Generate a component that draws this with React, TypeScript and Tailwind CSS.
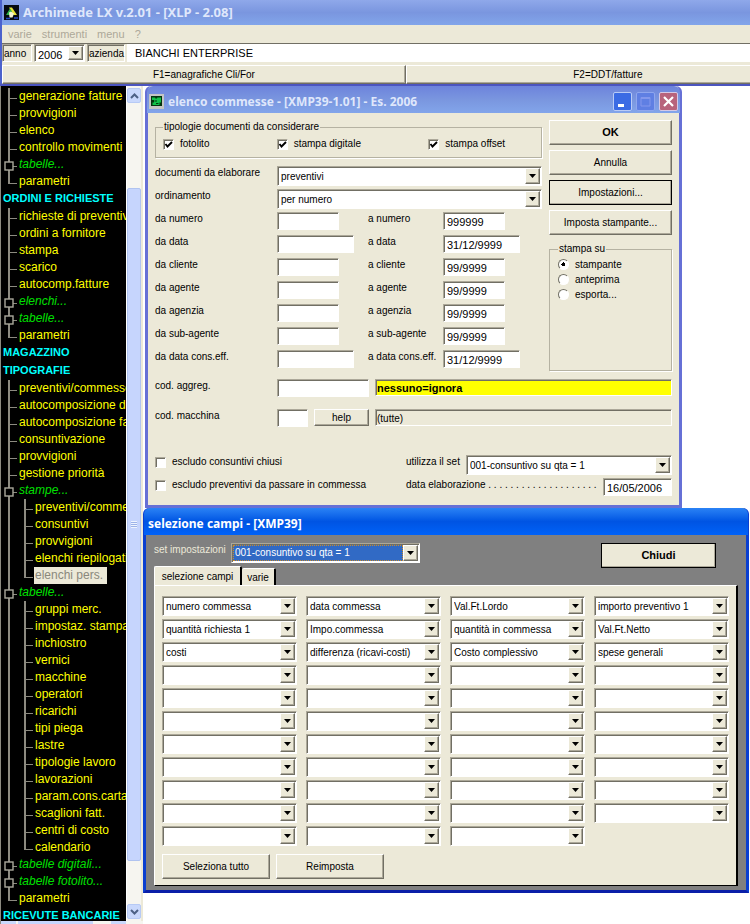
import type { ReactNode } from "react";

type TreeItem = {
  label: string;
  kind: "category" | "leaf" | "last" | "branch";
  nested?: boolean;
  selected?: boolean;
};

const tree: TreeItem[] = [
  { label: "generazione fatture", kind: "leaf" },
  { label: "provvigioni", kind: "leaf" },
  { label: "elenco", kind: "leaf" },
  { label: "controllo movimenti", kind: "leaf" },
  { label: "tabelle...", kind: "branch" },
  { label: "parametri", kind: "last" },
  { label: "ORDINI E RICHIESTE", kind: "category" },
  { label: "richieste di preventivo", kind: "leaf" },
  { label: "ordini a fornitore", kind: "leaf" },
  { label: "stampa", kind: "leaf" },
  { label: "scarico", kind: "leaf" },
  { label: "autocomp.fatture", kind: "leaf" },
  { label: "elenchi...", kind: "branch" },
  { label: "tabelle...", kind: "branch" },
  { label: "parametri", kind: "last" },
  { label: "MAGAZZINO", kind: "category" },
  { label: "TIPOGRAFIE", kind: "category" },
  { label: "preventivi/commesse", kind: "leaf" },
  { label: "autocomposizione de", kind: "leaf" },
  { label: "autocomposizione fa", kind: "leaf" },
  { label: "consuntivazione", kind: "leaf" },
  { label: "provvigioni", kind: "leaf" },
  { label: "gestione priorità", kind: "leaf" },
  { label: "stampe...", kind: "branch" },
  { label: "preventivi/comme", kind: "leaf", nested: true },
  { label: "consuntivi", kind: "leaf", nested: true },
  { label: "provvigioni", kind: "leaf", nested: true },
  { label: "elenchi riepilogati", kind: "leaf", nested: true },
  { label: "elenchi pers.", kind: "last", nested: true, selected: true },
  { label: "tabelle...", kind: "branch" },
  { label: "gruppi merc.", kind: "leaf", nested: true },
  { label: "impostaz. stampa", kind: "leaf", nested: true },
  { label: "inchiostro", kind: "leaf", nested: true },
  { label: "vernici", kind: "leaf", nested: true },
  { label: "macchine", kind: "leaf", nested: true },
  { label: "operatori", kind: "leaf", nested: true },
  { label: "ricarichi", kind: "leaf", nested: true },
  { label: "tipi piega", kind: "leaf", nested: true },
  { label: "lastre", kind: "leaf", nested: true },
  { label: "tipologie lavoro", kind: "leaf", nested: true },
  { label: "lavorazioni", kind: "leaf", nested: true },
  { label: "param.cons.carta", kind: "leaf", nested: true },
  { label: "scaglioni fatt.", kind: "leaf", nested: true },
  { label: "centri di costo", kind: "leaf", nested: true },
  { label: "calendario", kind: "last", nested: true },
  { label: "tabelle digitali...", kind: "branch" },
  { label: "tabelle fotolito...", kind: "branch" },
  { label: "parametri", kind: "last" },
  { label: "RICEVUTE BANCARIE", kind: "category" },
];

const ranges = [
  { id: "numero", label: "numero", to: "999999", wide: false },
  { id: "data", label: "data", to: "31/12/9999", wide: true },
  { id: "cliente", label: "cliente", to: "99/9999", wide: false },
  { id: "agente", label: "agente", to: "99/9999", wide: false },
  { id: "agenzia", label: "agenzia", to: "99/9999", wide: false },
  { id: "sub-agente", label: "sub-agente", to: "99/9999", wide: false },
  { id: "data-cons", label: "data cons.eff.", to: "31/12/9999", wide: true },
];

const fieldNames = [
  "numero commessa",
  "data commessa",
  "Val.Ft.Lordo",
  "importo preventivo 1",
  "quantità richiesta 1",
  "Impo.commessa",
  "quantità in commessa",
  "Val.Ft.Netto",
  "costi",
  "differenza (ricavi-costi)",
  "Costo complessivo",
  "spese generali",
];

// 11 rows of 4, the last slot is not used
const fields = Array.from({ length: 43 }, (_, i) => fieldNames[i] ?? "");

const sunken =
  "border border-t-[#aca899] border-l-[#aca899] border-r-white border-b-white shadow-[inset_1px_1px_0_#716f64]";
const raised =
  "border border-t-white border-l-white border-r-[#716f64] border-b-[#716f64] bg-[#ece9d8] shadow-[inset_-1px_-1px_0_#aca899]";
const titleFont = "font-['Noto_Sans','Open_Sans',sans-serif] font-bold";

function TreeConnector({ kind }: { kind: "leaf" | "last" | "branch" | "line" }) {
  return (
    <svg aria-hidden="true" className="h-full w-4 shrink-0" viewBox="0 0 16 17" preserveAspectRatio="none" fill="none" stroke="#8c8a80">
      <path d={kind === "last" ? "M7 0V11" : "M7 0V18"} strokeWidth="2" />
      {kind !== "line" && <path d="M7 10.5H15" />}
      {kind === "branch" && <rect x="3" y="6" width="8" height="8" fill="#000" stroke="#aaa89c" strokeWidth="1.4" />}
    </svg>
  );
}

function TreeRow({ item }: { item: TreeItem }) {
  if (item.kind === "category") {
    return <li className="h-[18px] pl-0.5 text-[11px] font-bold leading-[17px] text-[#00ffff]">{item.label}</li>;
  }

  const color = item.selected
    ? "bg-[#ece9d8] text-[#8a887c]"
    : item.kind === "branch"
      ? "italic text-[#00e000]"
      : "text-[#ffff00]";

  return (
    <li className="flex h-[17px] pl-px">
      {item.nested && <TreeConnector kind="line" />}
      <TreeConnector kind={item.kind} />
      <span className={`pr-1 pl-px leading-[17px] ${color}`}>{item.label}</span>
    </li>
  );
}

function ScrollButton({ up }: { up?: boolean }) {
  return (
    <button
      type="button"
      aria-label={up ? "scorri su" : "scorri giù"}
      className="grid h-[15px] w-full place-items-center rounded-xs border border-[#b7caf5] bg-[#c9d8fc]"
    >
      <svg aria-hidden="true" className="h-[6px] w-[9px]" viewBox="0 0 9 6" fill="none" stroke="#4d6185" strokeWidth="2">
        <path d={up ? "M1 5 4.5 1.5 8 5" : "M1 1 4.5 4.5 8 1"} />
      </svg>
    </button>
  );
}

function Sidebar() {
  return (
    <aside className="flex w-[143px] shrink-0 flex-col border-l border-[#8c8a80] bg-[#ece9d8]">
      <div className="flex min-h-0 flex-1">
        <ul className="min-w-0 flex-1 overflow-hidden whitespace-nowrap bg-black pt-0.5 text-[12px]">
          {tree.map((item, i) => (
            <TreeRow key={i} item={item} />
          ))}
        </ul>
        <div className="mr-0.5 flex w-[15px] flex-col border-l border-white bg-[#f6f5f0] pt-0.5 pb-0.5">
          <ScrollButton up />
          <div className="flex-[85]" />
          <div className="grid flex-[672] place-items-center rounded-xs border border-[#b0c3f0] bg-[#c6d5fd]">
            <div className="h-[7px] w-[6px] bg-[repeating-linear-gradient(#eef4fe_0_1px,#9db3e8_1px_2px)]" />
          </div>
          <div className="flex-[43]" />
          <ScrollButton />
        </div>
      </div>
      <div className="flex h-[3px] bg-[#f6f5f0]">
        <div className="w-[15px] bg-[#c9d8fc]" />
        <div className="ml-0.5 w-[75px] bg-[#c6d5fd]" />
        <div className="ml-[18px] w-[15px] bg-[#c9d8fc]" />
      </div>
    </aside>
  );
}

function ComboBox({
  id,
  value,
  label,
  className = "h-5",
  active = false,
}: {
  id: string;
  value: string;
  label?: string;
  className?: string;
  active?: boolean;
}) {
  return (
    <div className={`flex min-w-0 bg-white p-px ${sunken} ${className}`}>
      <select
        id={id}
        aria-label={label}
        defaultValue={value}
        className={`min-w-0 flex-1 appearance-none leading-[14px] outline-none ${
          active ? "border border-dotted border-[#c98b2c] bg-[#316ac5] pl-px text-white" : "pt-0.5 pl-0.5"
        }`}
      >
        <option value={value}>{value}</option>
      </select>
      <span className={`grid w-[15px] shrink-0 place-items-center ${raised}`}>
        <svg aria-hidden="true" className="h-1 w-[7px]" viewBox="0 0 7 4">
          <path d="M0 0H7L3.5 4Z" fill="#000" />
        </svg>
      </span>
    </div>
  );
}

function TextBox({ id, value = "", className }: { id: string; value?: string; className: string }) {
  return (
    <input
      id={id}
      type="text"
      defaultValue={value}
      className={`h-[18px] bg-white pt-px pl-[3px] text-[11px] leading-[14px] outline-none ${sunken} ${className}`}
    />
  );
}

function CheckBox({ label, checked = false }: { label: string; checked?: boolean }) {
  return (
    <label className="flex items-center gap-1.5 leading-[14px] whitespace-nowrap">
      <span className="grid shrink-0">
        <input
          type="checkbox"
          defaultChecked={checked}
          className={`peer h-[11px] w-[11px] appearance-none bg-white [grid-area:1/1] ${sunken}`}
        />
        <svg
          aria-hidden="true"
          className="pointer-events-none hidden h-[11px] w-[11px] [grid-area:1/1] peer-checked:block"
          viewBox="0 0 11 11"
          fill="none"
        >
          <path d="M2.5 5 4.5 7.5 9 3" stroke="#000" strokeWidth="1.9" />
        </svg>
      </span>
      {label}
    </label>
  );
}

function Radio({ label, checked = false }: { label: string; checked?: boolean }) {
  return (
    <label className="flex h-[15px] items-center gap-1.5">
      <input
        type="radio"
        name="stampa-su"
        defaultChecked={checked}
        className="h-[11px] w-[11px] shrink-0 appearance-none rounded-full border border-t-[#716f64] border-l-[#716f64] border-r-white border-b-white bg-white checked:bg-[radial-gradient(circle,#000_2px,#fff_2px)]"
      />
      {label}
    </label>
  );
}

function PushButton({ children, className = "" }: { children: ReactNode; className?: string }) {
  return (
    <button type="button" className={`h-[25px] ${raised} ${className}`}>
      {children}
    </button>
  );
}

function AppIcon() {
  return (
    <svg aria-hidden="true" className="h-[15px] w-[15px]" viewBox="0 0 15 15">
      <rect width="15" height="15" fill="#060a10" />
      <path d="M5 2.5H8L13 10H9.5Z" fill="#e8e337" />
      <path d="M2 10 6 3.5 8 6.5 5.5 10Z" fill="#2fb24a" />
      <path d="M5 7.5 7 6.5 10 8.5 8.5 12.5H5.5Z" fill="#f3f3d0" />
      <path d="M2 13.5H6M10 13H14" stroke="#2747c4" strokeWidth="1.4" />
    </svg>
  );
}

function ReportIcon() {
  return (
    <svg aria-hidden="true" className="h-[15px] w-[15px]" viewBox="0 0 15 15">
      <rect width="15" height="15" fill="#c4c6c4" />
      <rect x="2" y="2" width="11" height="10" fill="#04340f" />
      <path d="M3 3.5H6L7 5 8.5 3.5H12V8.5H10.5V11H3.5V8.5H5V6H3Z" fill="#11c24a" />
      <path d="M5.5 7H8M7 9.5H9.5" stroke="#04340f" />
    </svg>
  );
}

function Header() {
  return (
    <header className="shrink-0 border-b-2 border-[#4c55c0]">
      <div className="border-l-2 border-[#4c62cc] bg-[#ece9d8]">
        <div className="flex h-[25px] items-center gap-1 bg-linear-to-b from-[#8fa8ea] via-[#7a96df] to-[#82a5ea] pl-0.5 text-[#dfe7fb]">
          <AppIcon />
          <h1 className={`text-[13px] ${titleFont}`}>Archimede LX v.2.01 - [XLP - 2.08]</h1>
        </div>
        <nav className="flex h-[19px] items-center gap-2.5 border-b border-[#716f64] pl-1.5 text-[11px] text-[#aca899]">
          <button type="button">varie</button>
          <button type="button">strumenti</button>
          <button type="button">menu</button>
          <button type="button">?</button>
        </nav>
        <div className="flex h-[18px] gap-0.5 text-[11px]">
          <label htmlFor="anno" className={`w-[30px] pl-px text-[10px] leading-[17px] ${sunken}`}>
            anno
          </label>
          <ComboBox id="anno" value="2006" className="h-[18px] w-[51px]" />
          <label htmlFor="azienda" className={`w-[38px] pl-px text-[10px] leading-[17px] ${sunken}`}>
            azienda
          </label>
          <input
            id="azienda"
            defaultValue="BIANCHI ENTERPRISE"
            className="min-w-0 flex-1 bg-white pl-2 outline-none"
          />
        </div>
        <div className="flex overflow-hidden pt-[3px] text-[10px]">
          <button type="button" className={`h-[19px] w-[54%] shrink-0 ${raised}`}>
            F1=anagrafiche Cli/For
          </button>
          <button type="button" className={`h-[19px] w-[54%] shrink-0 ${raised}`}>
            F2=DDT/fatture
          </button>
        </div>
      </div>
    </header>
  );
}

function CommesseWindow() {
  return (
    <section
      aria-label="elenco commesse"
      className="mr-[68px] ml-0.5 rounded-t-md border-x-3 border-b-3 border-[#6670d6] bg-[#ece9d8]"
    >
      <div className="-mx-px flex h-[27px] items-center gap-1 rounded-t-md bg-linear-to-b from-[#6d83dc] via-[#7a96df] to-[#82a5ea] pt-1 pr-0.5 pl-0.5 text-[#dfe7fb]">
        <ReportIcon />
        <h2 className={`flex-1 text-[12px] ${titleFont}`}>elenco commesse - [XMP39-1.01] - Es. 2006</h2>
        <button type="button" aria-label="riduci a icona" className="h-[19px] w-[19px] rounded-xs border border-[#b9cbf6] bg-[#3b6be4]">
          <svg aria-hidden="true" viewBox="0 0 17 17">
            <path d="M4 12.5H10" stroke="#fff" strokeWidth="3" />
          </svg>
        </button>
        <button type="button" aria-label="ingrandisci" className="h-[19px] w-[19px] rounded-xs border border-[#8fa6ee] bg-[#5f7fe3]">
          <svg aria-hidden="true" viewBox="0 0 17 17" fill="none" stroke="#8498ec">
            <path d="M4 4.5H13V13H4Z" />
            <path d="M4 5H13" strokeWidth="2" />
          </svg>
        </button>
        <button type="button" aria-label="chiudi" className="h-[19px] w-[19px] rounded-xs border border-[#d5c9e6] bg-[#b8637c]">
          <svg aria-hidden="true" viewBox="0 0 17 17">
            <path d="M4 4 13 13M13 4 4 13" stroke="#fff" strokeWidth="2.2" />
          </svg>
        </button>
      </div>

      <form className="px-[7px] pt-[7px] pb-[9px]">
        <div className="flex gap-[7px]">
          <div className="min-w-0 flex-1">
            <fieldset className="mb-2 border border-[#b5b2a2] px-[7px] pb-1.5 shadow-[1px_1px_0_#fff]">
              <legend className="px-px leading-[14px]">tipologie documenti da considerare</legend>
              <div className="grid grid-cols-[114fr_152fr_106fr] pt-[3px]">
                <CheckBox label="fotolito" checked />
                <CheckBox label="stampa digitale" checked />
                <CheckBox label="stampa offset" checked />
              </div>
            </fieldset>
            <div className="flex h-[23px] items-start">
              <label htmlFor="documenti" className="w-[122px] leading-[14px]">
                documenti da elaborare
              </label>
              <ComboBox id="documenti" value="preventivi" className="h-5 flex-1" />
            </div>
            <div className="flex h-[23px] items-start">
              <label htmlFor="ordinamento" className="w-[122px] leading-[14px]">
                ordinamento
              </label>
              <ComboBox id="ordinamento" value="per numero" className="h-5 flex-1" />
            </div>
            {ranges.map((range) => (
              <div key={range.id} className="grid h-[23px] grid-cols-[122px_91px_75px_1fr] items-start">
                <label htmlFor={`da-${range.id}`} className="leading-[14px]">
                  da {range.label}
                </label>
                <TextBox id={`da-${range.id}`} className={range.wide ? "w-[77px]" : "w-[62px]"} />
                <label htmlFor={`a-${range.id}`} className="leading-[14px] whitespace-nowrap">
                  a {range.label}
                </label>
                <TextBox id={`a-${range.id}`} value={range.to} className={range.wide ? "w-[77px]" : "w-[62px]"} />
              </div>
            ))}
          </div>

          <div className="flex w-[123px] shrink-0 flex-col gap-[5px] pb-0.5">
            <PushButton className="text-[11px] font-bold">OK</PushButton>
            <PushButton>Annulla</PushButton>
            <PushButton className="outline-1 -outline-offset-1 outline-black">Impostazioni...</PushButton>
            <PushButton>Imposta stampante...</PushButton>
            <fieldset className="mt-0.5 flex-1 border border-[#b5b2a2] px-2 shadow-[1px_1px_0_#fff]">
              <legend className="px-px leading-[14px]">stampa su</legend>
              <div className="pt-px">
                <Radio label="stampante" checked />
                <Radio label="anteprima" />
                <Radio label="esporta..." />
              </div>
            </fieldset>
          </div>
        </div>

        <div className="mt-1.5 grid grid-cols-[122px_92px_1fr] items-start gap-y-3">
          <label htmlFor="aggreg" className="leading-[14px]">
            cod. aggreg.
          </label>
          <TextBox id="aggreg" className="w-full" />
          <output className={`ml-1.5 h-[17px] bg-[#ffff00] pl-px text-[11px] font-bold leading-[17px] ${sunken}`}>
            nessuno=ignora
          </output>
          <label htmlFor="macchina" className="leading-[14px]">
            cod. macchina
          </label>
          <div className="flex justify-between">
            <TextBox id="macchina" className="w-[31px]" />
            <button type="button" className={`h-[17px] w-[55px] ${raised}`}>
              help
            </button>
          </div>
          <output className={`ml-1.5 h-[17px] pl-px leading-[17px] ${sunken}`}>(tutte)</output>
        </div>

        <div className="mt-7 grid grid-cols-[251px_minmax(0,1fr)] items-start gap-y-[3px]">
          <CheckBox label="escludo consuntivi chiusi" />
          <div className="flex items-start">
            <label htmlFor="set" className="w-[60px] leading-[14px]">
              utilizza il set
            </label>
            <ComboBox id="set" value="001-consuntivo su qta = 1" className="h-5 flex-1" />
          </div>
          <CheckBox label="escludo preventivi da passare in commessa" />
          <div className="flex items-start">
            <label htmlFor="data-elab" className="min-w-0 flex-1 leading-[14px] whitespace-nowrap">
              data elaborazione . . . . . . . . . . . . . . . . . . . .
            </label>
            <TextBox id="data-elab" value="16/05/2006" className="w-[69px]" />
          </div>
        </div>
      </form>
    </section>
  );
}

function SelezioneWindow() {
  return (
    <section
      aria-label="selezione campi"
      className="mr-px rounded-t-md border-x-3 border-b-3 border-[#0a3fd0] border-b-[#0a1fa8] bg-[#808080]"
    >
      <div className="-mx-0.5 flex h-[27px] items-center rounded-t-md bg-linear-to-b from-[#2a82f5] via-[#0054e3] to-[#0062f8] pt-1 pl-1 text-white">
        <h2 className={`text-[12px] ${titleFont}`}>selezione campi - [XMP39]</h2>
      </div>
      <div className="px-2 pt-2 pb-1">
        <div className="flex items-start">
          <label htmlFor="set-impostazioni" className="w-[77px] leading-[14px] text-[#ece9d8]">
            set impostazioni
          </label>
          <ComboBox id="set-impostazioni" value="001-consuntivo su qta = 1" className="h-5 w-[189px]" active />
          <PushButton className="mr-[22px] ml-auto w-[115px] text-[11px] font-bold outline-1 -outline-offset-1 outline-black">
            Chiudi
          </PushButton>
        </div>
        <div role="tablist" className="-mt-0.5 flex h-[19px] items-end">
          <button
            type="button"
            role="tab"
            aria-selected="true"
            className="h-[19px] w-[88px] rounded-t-xs border-t border-r-2 border-l border-t-white border-r-black border-l-white bg-[#ece9d8]"
          >
            selezione campi
          </button>
          <button
            type="button"
            role="tab"
            aria-selected="false"
            className="h-[17px] w-[34px] rounded-t-xs border-t border-r-2 border-t-white border-r-black bg-[#ece9d8]"
          >
            varie
          </button>
        </div>
        <div
          role="tabpanel"
          className="border-t border-r-2 border-b border-l border-t-white border-r-black border-b-black border-l-white bg-[#ece9d8] px-[7px] pt-2.5 pb-1.5"
        >
          <div className="grid grid-cols-4 gap-x-[9px] gap-y-[3px]">
            {fields.map((field, i) => (
              <ComboBox key={i} id={`campo-${i + 1}`} label={`campo ${i + 1}`} value={field} />
            ))}
          </div>
          <div className="mt-2 flex gap-1.5">
            <PushButton className="w-[108px]">Seleziona tutto</PushButton>
            <PushButton className="w-[108px]">Reimposta</PushButton>
          </div>
        </div>
      </div>
    </section>
  );
}

export default function App() {
  return (
    <div className="flex h-screen flex-col overflow-hidden bg-white font-['Liberation_Sans',Arial,sans-serif] text-black">
      <Header />
      <div className="flex min-h-0 flex-1">
        <Sidebar />
        <main className="min-w-0 flex-1 text-[10px]">
          <CommesseWindow />
          <SelezioneWindow />
        </main>
      </div>
    </div>
  );
}
